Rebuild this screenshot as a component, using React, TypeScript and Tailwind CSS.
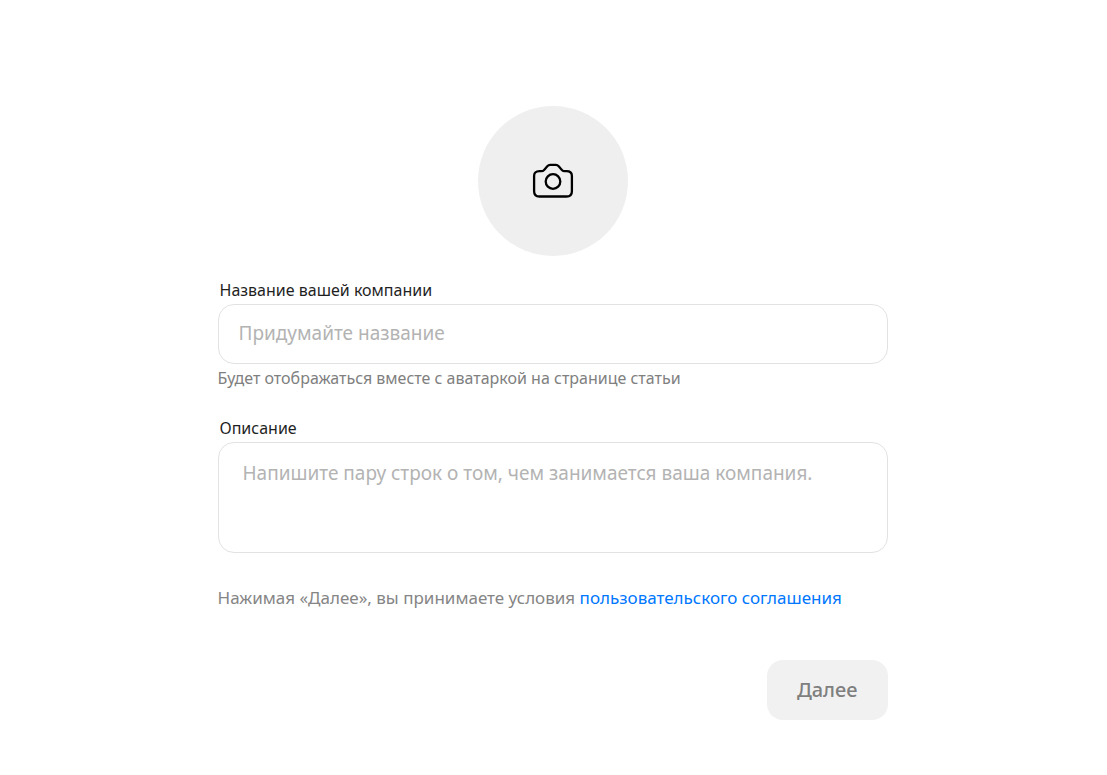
import React, { useState } from 'react';

const CameraIcon = () => (
  <svg
    className="size-12"
    viewBox="0 0 48 48"
    fill="none"
    stroke="currentColor"
    strokeWidth="2.3"
    strokeLinejoin="round"
    aria-hidden="true"
  >
    <path d="M10.5 14.2h1.8c1.2 0 2-.4 2.8-1.3l3.2-3.6c.8-.9 1.6-1.4 2.8-1.4h5.8c1.2 0 2 .5 2.8 1.4l3.2 3.6c.8.9 1.6 1.3 2.8 1.3h1.8c3.9 0 5.4 1.9 5.4 4.8v15.2c0 3.6-1.8 5.3-5.3 5.3H10.4c-3.5 0-5.3-1.7-5.3-5.3V19c0-2.9 1.4-4.8 5.4-4.8Z" />
    <circle cx="24" cy="24.5" r="7.3" />
  </svg>
);

export default function App() {
  const [name, setName] = useState('');
  const [description, setDescription] = useState('');

  return (
    <main className="min-h-screen bg-white pt-[106px] pr-[18px] pb-14 pl-4 font-['Noto_Sans',sans-serif]">
      <form
        className="mx-auto flex w-full max-w-[670px] flex-col"
        onSubmit={(e) => e.preventDefault()}
      >
        <button
          type="button"
          aria-label="Загрузить аватар"
          className="flex size-[150px] cursor-pointer items-center justify-center self-center rounded-full bg-[#efefef] text-black"
        >
          <CameraIcon />
        </button>

        {/* Company name */}
        <div className="mt-[22px] flex flex-col">
          <label
            htmlFor="name"
            className="px-0.5 pb-0.5 text-base text-[#1f1f1f]"
          >
            Название вашей компании
          </label>
          <input
            id="name"
            type="text"
            value={name}
            onChange={(e) => setName(e.target.value)}
            placeholder="Придумайте название"
            className="h-[60px] rounded-2xl border border-[#e2e2e2] px-5 pb-0.5 text-[19px] placeholder:text-[#b3b3b3]"
          />
          <p className="mt-0.5 text-base text-[#808080]">
            Будет отображаться вместе с аватаркой на странице статьи
          </p>
        </div>

        {/* Description */}
        <div className="mt-[26px] flex flex-col">
          <label
            htmlFor="description"
            className="px-0.5 pb-0.5 text-base text-[#1f1f1f]"
          >
            Описание
          </label>
          <textarea
            id="description"
            value={description}
            onChange={(e) => setDescription(e.target.value)}
            placeholder="Напишите пару строк о том, чем занимается ваша компания."
            className="h-[111px] resize-none rounded-2xl border border-[#e2e2e2] px-6 py-4 text-[19px] leading-7 placeholder:text-[#b3b3b3]"
          />
        </div>

        <p className="mt-[31px] text-[17px] leading-7 text-[#858585]">
          Нажимая «Далее», вы принимаете условия{' '}
          <a href="#" className="text-[#0077ff]">
            пользовательского соглашения
          </a>
        </p>

        <button
          type="submit"
          className="mt-12 h-[60px] cursor-pointer self-end rounded-2xl bg-[#f1f1f1] px-[30px] text-xl font-medium text-[#7f7f7f]"
        >
          Далее
        </button>
      </form>
    </main>
  );
}
